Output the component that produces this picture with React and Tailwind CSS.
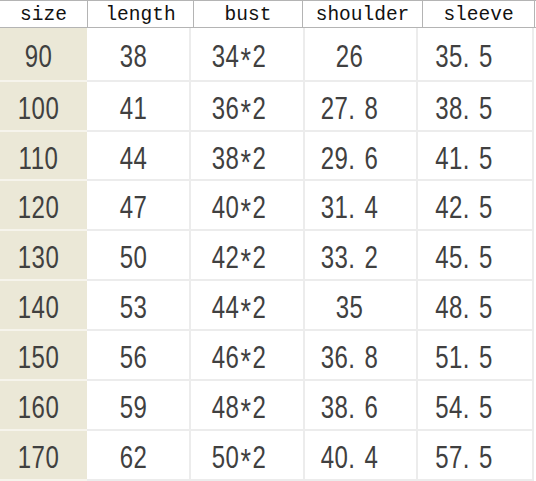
const headers = ['size', 'length', 'bust', 'shoulder', 'sleeve']

const rows = [
  ['90', '38', '34*2', '26', '35.5'],
  ['100', '41', '36*2', '27.8', '38.5'],
  ['110', '44', '38*2', '29.6', '41.5'],
  ['120', '47', '40*2', '31.4', '42.5'],
  ['130', '50', '42*2', '33.2', '45.5'],
  ['140', '53', '44*2', '35', '48.5'],
  ['150', '56', '46*2', '36.8', '51.5'],
  ['160', '59', '48*2', '38.6', '54.5'],
  ['170', '62', '50*2', '40.4', '57.5'],
]

const rowHeights = ['h-[54px]', 'h-[50px]', 'h-[49px]', 'h-[50px]', 'h-[50px]', 'h-[50px]', 'h-[50px]', 'h-[50px]', 'h-[50px]']
const pads = ['pr-[10px]', 'pr-[9px]', 'pr-[16px]', 'pr-[22px]', 'pr-[22px]']

// numbers in the picture show a wide gap after the decimal point and a centred star
const Num = ({ value }) => {
  if (value.includes('*')) {
    const [a, b] = value.split('*')
    return (
      <span className="inline-block scale-y-[1.28] tracking-[0.5px]">
        {a}
        <span className="relative top-[4px] text-[27px] leading-[0] mx-[1px]">*</span>
        {b}
      </span>
    )
  }
  const [a, b] = value.split('.')
  return (
    <span className="inline-block scale-y-[1.28] tracking-[0.5px]">
      {a}
      {b !== undefined && (
        <>
          <span className="mr-[9px]">.</span>
          {b}
        </>
      )}
    </span>
  )
}

export default function App() {
  return (
    <div className="w-[536px] bg-white">
      <div className="grid grid-cols-[88px_106px_109px_120px_112px] h-[28px] border-t border-b border-[#b4b4b4] font-['Liberation_Mono',monospace] text-[19.5px] text-[#111]">
        {headers.map((h) => (
          <div key={h} className="flex items-center justify-center border-r border-[#b4b4b4] leading-none pt-[3px]">
            {h}
          </div>
        ))}
      </div>
      <div className="grid grid-cols-[87px_104px_114px_113px_116px] font-['Liberation_Sans',Arial,sans-serif] text-[24px] leading-none text-[#404040]">
        {rows.map((r, i) =>
          r.map((v, j) => (
            <div
              key={`${i}-${j}`}
              className={`${rowHeights[i]} ${pads[j]} flex items-center justify-center pt-[6px] border-b-2 ${
                j === 0 ? 'bg-[#ebe8d7] border-[#f6f4ec]' : 'border-r-2 border-[#ececec]'
              }`}
            >
              <Num value={v} />
            </div>
          ))
        )}
      </div>
    </div>
  )
}
